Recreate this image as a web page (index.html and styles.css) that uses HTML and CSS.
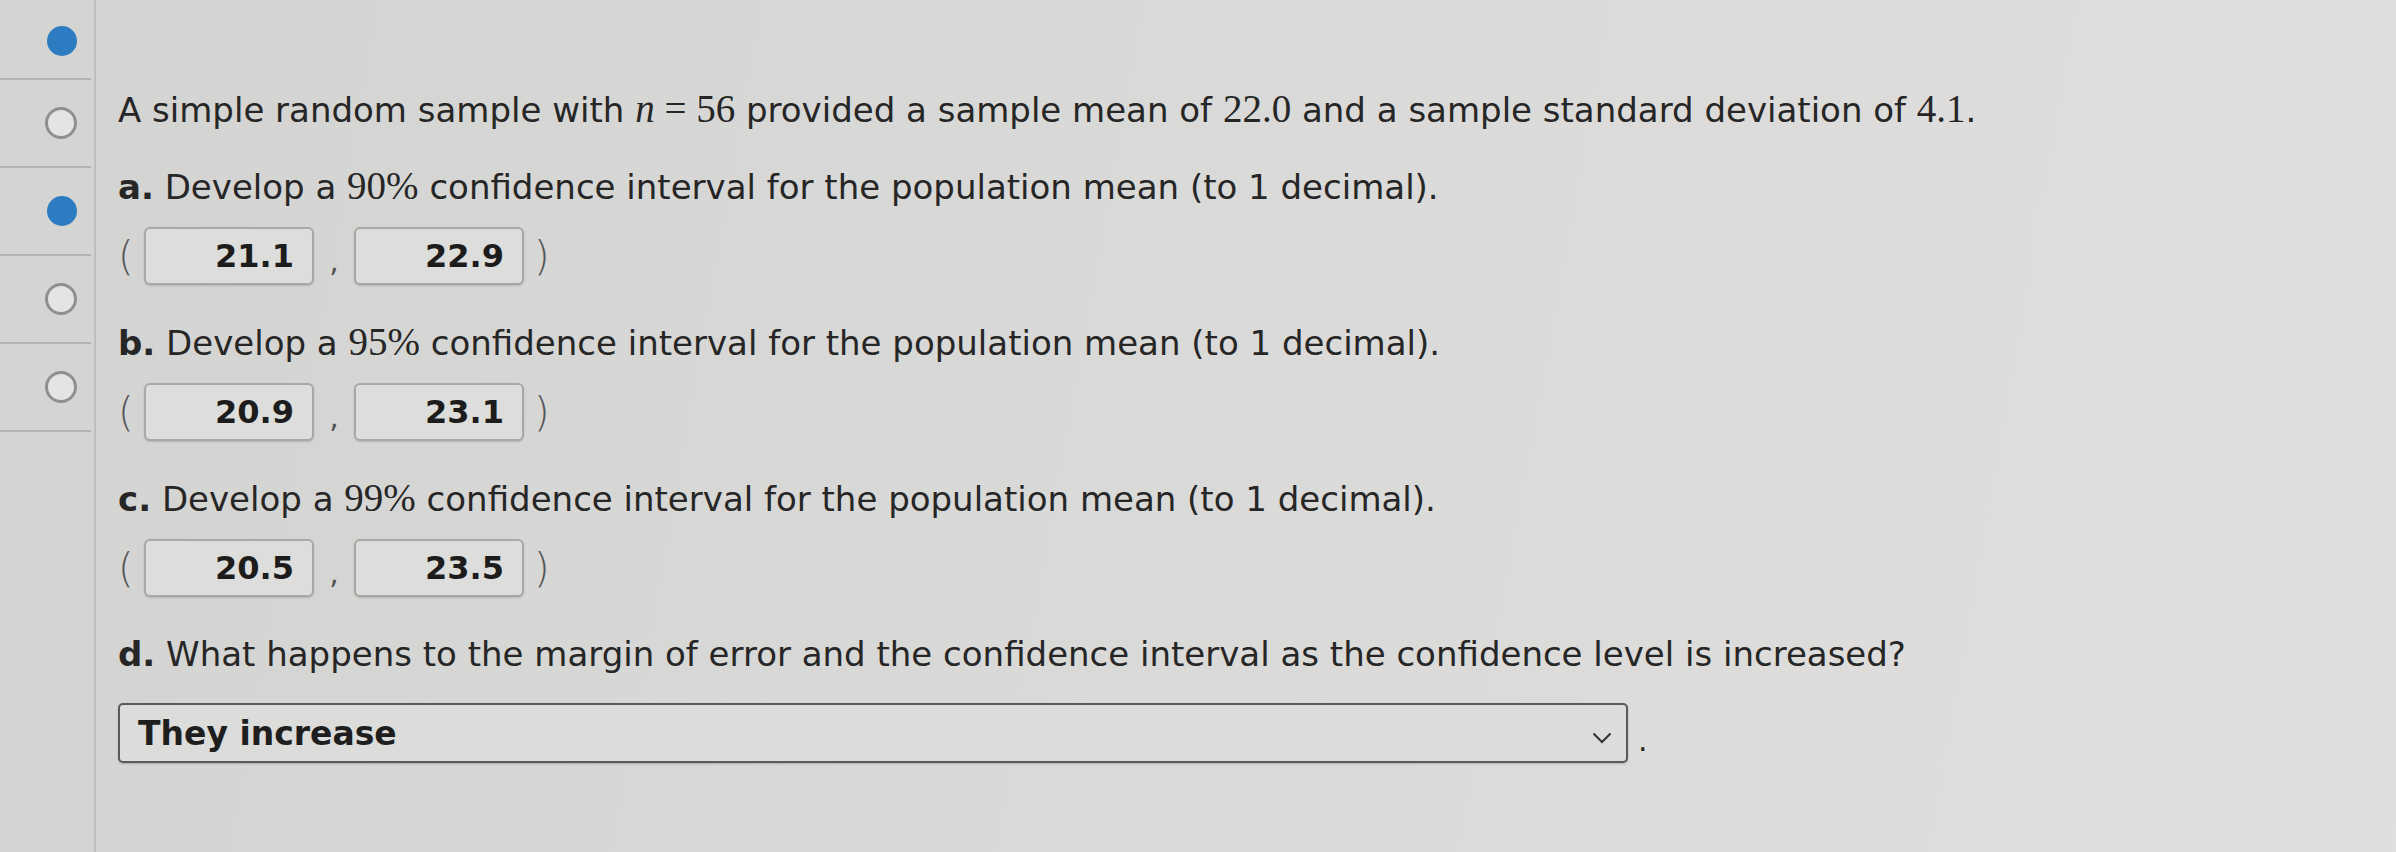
FILE: index.html
```html
<!DOCTYPE html>
<html lang="en">
<head>
<meta charset="utf-8">
<title>Confidence interval question</title>
<link rel="stylesheet" href="styles.css">
</head>
<body>
<div class="page">
  <nav class="sidebar">
    <div class="step first"><span class="dot filled"></span></div>
    <div class="step"><span class="dot"></span></div>
    <div class="step"><span class="dot filled"></span></div>
    <div class="step"><span class="dot"></span></div>
    <div class="step"><span class="dot"></span></div>
  </nav>
  <main class="content">
    <p class="line intro">A simple random sample with <span class="math"><i>n</i> = 56</span> provided a sample mean of <span class="math">22.0</span> and a sample standard deviation of <span class="math">4.1</span>.</p>

    <p class="line q"><b>a.</b> Develop a <span class="math">90%</span> confidence interval for the population mean (to 1 decimal).</p>
    <div class="interval">
      <span class="paren">(</span><span class="box">21.1</span><span class="comma">,</span><span class="box">22.9</span><span class="paren">)</span>
    </div>

    <p class="line q"><b>b.</b> Develop a <span class="math">95%</span> confidence interval for the population mean (to 1 decimal).</p>
    <div class="interval">
      <span class="paren">(</span><span class="box">20.9</span><span class="comma">,</span><span class="box">23.1</span><span class="paren">)</span>
    </div>

    <p class="line q"><b>c.</b> Develop a <span class="math">99%</span> confidence interval for the population mean (to 1 decimal).</p>
    <div class="interval">
      <span class="paren">(</span><span class="box">20.5</span><span class="comma">,</span><span class="box">23.5</span><span class="paren">)</span>
    </div>

    <p class="line q"><b>d.</b> What happens to the margin of error and the confidence interval as the confidence level is increased?</p>
    <div class="answer">
      <div class="select">
        <span class="select-text">They increase</span>
        <svg class="chev" width="20" height="12" viewBox="0 0 20 12"><path d="M1.5 1.5 L10 10 L18.5 1.5" fill="none" stroke="#333" stroke-width="2"/></svg>
      </div>
      <span class="stop">.</span>
    </div>
  </main>
</div>
</body>
</html>
```

FILE: styles.css
```css
html, body {
  margin: 0;
  padding: 0;
}
body {
  width: 2396px;
  height: 852px;
  overflow: hidden;
  background: linear-gradient(100deg, #d3d3d1 0%, #d9d9d7 45%, #e0dfdd 100%);
  font-family: "DejaVu Sans", Verdana, sans-serif;
  color: #262626;
}
.page {
  display: flex;
  height: 852px;
}
.sidebar {
  width: 94px;
  flex: none;
  border-right: 2px solid #bdbdbb;
  display: flex;
  flex-direction: column;
  background: #d4d4d2;
}
.step {
  height: 88px;
  border-bottom: 2px solid #b3b3b1;
  margin-right: 3px;
  display: flex;
  align-items: center;
  justify-content: flex-end;
  padding-right: 14px;
  box-sizing: border-box;
}
.step.first {
  height: 80px;
  align-items: flex-start;
  padding-top: 26px;
}
.dot {
  width: 26px;
  height: 26px;
  border-radius: 50%;
  border: 3px solid #8f8f8f;
  background: #e4e4e2;
}
.dot.filled {
  width: 30px;
  height: 30px;
  border: none;
  background: #2d7bc0;
}
.content {
  padding-left: 22px;
  padding-top: 90px;
  flex: 1;
}
.line {
  margin: 0;
  font-size: 34px;
  line-height: 38px;
  white-space: nowrap;
}
.math {
  font-family: "Liberation Serif", "DejaVu Serif", serif;
  font-size: 39px;
}
.q {
  margin-top: 38px;
}
.interval {
  display: flex;
  align-items: center;
  margin-top: 21px;
  height: 58px;
}
.paren {
  font-size: 40px;
  font-weight: 300;
  color: #555;
  width: 26px;
  text-align: left;
}
.paren:last-child {
  margin-left: 10px;
}
.comma {
  width: 40px;
  text-align: center;
  font-size: 30px;
  color: #555;
  padding-top: 8px;
}
.box {
  width: 170px;
  height: 58px;
  box-sizing: border-box;
  border: 2px solid #a8a8a6;
  border-radius: 6px;
  background: #dddddb;
  box-shadow: 0 1px 2px rgba(0,0,0,0.15);
  display: flex;
  align-items: center;
  justify-content: flex-end;
  padding-right: 18px;
  font-weight: bold;
  font-size: 32px;
  color: #1c1c1c;
}
.answer {
  display: flex;
  align-items: center;
  margin-top: 30px;
}
.select {
  width: 1510px;
  height: 60px;
  box-sizing: border-box;
  border: 2px solid #5a5a5a;
  border-radius: 5px;
  background: #dcdcda;
  display: flex;
  align-items: center;
  justify-content: space-between;
  padding: 0 14px 0 18px;
  box-shadow: 0 1px 2px rgba(0,0,0,0.2);
}
.select-text {
  font-weight: bold;
  font-size: 33px;
  color: #1e1e1e;
}
.chev {
  margin-top: 10px;
}
.stop {
  font-size: 30px;
  margin-left: 10px;
  padding-top: 14px;
}
```
